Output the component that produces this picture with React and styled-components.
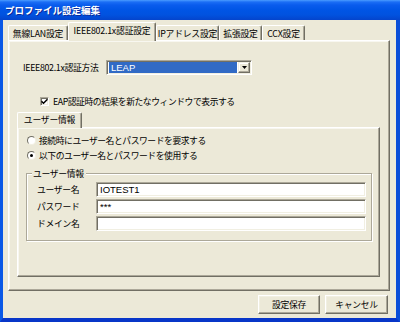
import React from 'react';
import styled, { createGlobalStyle } from 'styled-components';

const FONT = `"Noto Sans CJK JP", "Noto Sans", "Liberation Sans", sans-serif`;

const Global = createGlobalStyle`
  html, body { margin: 0; padding: 0; background: #fff; }
  body { width: 400px; height: 322px; overflow: hidden; }
  * { box-sizing: border-box; }
`;

const Window = styled.div`
  width: 400px;
  height: 322px;
  display: flex;
  flex-direction: column;
  font-family: ${FONT};
  font-size: 8.8px;
  color: #000;
`;

const TitleBar = styled.div`
  height: 20px;
  flex: none;
  display: flex;
  align-items: center;
  padding-left: 5px;
  color: #fff;
  font-weight: bold;
  font-size: 9.5px;
  text-shadow: 1px 1px 0 #0a2a9a;
  background: linear-gradient(
    to bottom,
    #4a9cff 0px,
    #1b6ef5 2px,
    #0a5ced 5px,
    #0055e5 10px,
    #0152df 15px,
    #0444cc 20px
  );
`;

const Frame = styled.div`
  flex: 1;
  display: flex;
  border-left: 3px solid #0a58e6;
  border-right: 4px solid #0a4ed8;
  border-bottom: 4px solid #0836c8;
`;

const Client = styled.div`
  flex: 1;
  display: flex;
  flex-direction: column;
  background: #ece9d8;
  padding: 2px 6px 0 5px;
`;

const TabStrip = styled.div`
  height: 18px;
  flex: none;
  display: flex;
  align-items: flex-end;
  position: relative;
  z-index: 1;
`;

const Tab = styled.div`
  width: ${(p) => p.$w}px;
  height: ${(p) => (p.$active ? 19 : 15)}px;
  margin-bottom: ${(p) => (p.$active ? -1 : 0)}px;
  display: flex;
  align-items: center;
  justify-content: center;
  background: #ece9d8;
  border-top: 1px solid #fff;
  border-left: 1px solid #fff;
  border-right: 1px solid #716f64;
  box-shadow: inset -1px 0 #aca899;
  border-radius: 2px 2px 0 0;
  white-space: nowrap;
  letter-spacing: -0.2px;
  padding-bottom: ${(p) => (p.$active ? 3 : 0)}px;
`;

const Panel = styled.div`
  height: ${(p) => p.$h}px;
  flex: none;
  display: flex;
  flex-direction: column;
  border: 1px solid;
  border-color: #fff #716f64 #716f64 #fff;
  box-shadow: inset -1px -1px #aca899, inset 1px 1px #f8f7f0;
  background: #ece9d8;
`;

const MainPanel = styled(Panel)`
  padding: 19px 9px 0 8px;
`;

const MethodRow = styled.div`
  display: flex;
  align-items: center;
  height: 15px;
  margin-left: 6px;
`;

const FieldLabel = styled.span`
  width: ${(p) => p.$w}px;
  flex: none;
  white-space: nowrap;
  letter-spacing: -0.3px;
`;

const Select = styled.div`
  width: 146px;
  height: 15px;
  display: flex;
  align-items: center;
  padding: 0 1px 0 2px;
  background: #fff;
  border: 1px solid;
  border-color: #aca899 #fff #fff #aca899;
  box-shadow: inset 1px 1px #716f64, inset -1px -1px #f1efe2;
`;

const SelectValue = styled.div`
  flex: 1;
  height: 11px;
  display: flex;
  align-items: center;
  background: #316ac5;
  color: #fff;
  padding-left: 2px;
  margin-right: 1px;
  font-family: "Liberation Sans", sans-serif;
  font-size: 9.5px;
`;

const DropButton = styled.div`
  width: 12px;
  height: 11px;
  flex: none;
  display: flex;
  align-items: center;
  justify-content: center;
  background: #ece9d8;
  border: 1px solid;
  border-color: #f1efe2 #716f64 #716f64 #f1efe2;
  box-shadow: inset -1px -1px #aca899, inset 1px 1px #fff;
`;

const CheckRow = styled.div`
  display: flex;
  align-items: center;
  height: 10px;
  margin: 21px 0 0 23px;
  gap: 4px;
  white-space: nowrap;
  letter-spacing: -0.45px;
`;

const CheckBox = styled.div`
  width: 9px;
  height: 9px;
  flex: none;
  display: flex;
  align-items: center;
  justify-content: center;
  background: #fff;
  border: 1px solid;
  border-color: #aca899 #fff #fff #aca899;
  box-shadow: inset 1px 1px #716f64, inset -1px -1px #f1efe2;
`;

const InnerStrip = styled.div`
  height: 15px;
  margin-top: 6px;
  flex: none;
  display: flex;
  align-items: flex-end;
  position: relative;
  z-index: 1;
`;

const InnerPanel = styled(Panel)`
  padding: 6px 7px 0 9px;
`;

const RadioRow = styled.div`
  display: flex;
  align-items: center;
  height: 12px;
  margin-top: ${(p) => p.$mt}px;
  gap: 3px;
  white-space: nowrap;
  letter-spacing: -0.45px;
`;

const Radio = styled.div`
  width: 9px;
  height: 9px;
  flex: none;
  border-radius: 50%;
  background: #fff;
  border: 1px solid;
  border-color: #716f64 #f1efe2 #f1efe2 #716f64;
  display: flex;
  align-items: center;
  justify-content: center;
  &::after {
    content: '';
    width: 3px;
    height: 3px;
    border-radius: 50%;
    background: ${(p) => (p.$on ? '#000' : 'transparent')};
  }
`;

const GroupBox = styled.div`
  margin: 12px 0 0 -1px;
  border: 1px solid #aca899;
  box-shadow: inset 1px 1px #fff, 1px 1px #fff;
  padding: 0 5px 9px 10px;
  display: flex;
  flex-direction: column;
`;

const Legend = styled.div`
  align-self: flex-start;
  margin: -6px 0 0 -5px;
  height: 11px;
  padding: 0 2px 0 1px;
  line-height: 11px;
  background: #ece9d8;
  letter-spacing: -0.3px;
`;

const Fields = styled.div`
  margin-top: 3px;
  display: flex;
  flex-direction: column;
  gap: 2px;
`;

const FieldRow = styled.div`
  display: flex;
  align-items: center;
  height: 15px;
`;

const Input = styled.div`
  flex: 1;
  height: 15px;
  display: flex;
  align-items: center;
  padding-left: 3px;
  background: #fff;
  border: 1px solid;
  border-color: #aca899 #fff #fff #aca899;
  box-shadow: inset 1px 1px #716f64, inset -1px -1px #f1efe2;
  font-family: "Liberation Sans", sans-serif;
  font-size: 9.5px;
`;

const ButtonRow = styled.div`
  height: 19px;
  margin-top: 4px;
  padding-right: 2px;
  display: flex;
  justify-content: flex-end;
  gap: 5px;
`;

const Button = styled.div`
  width: ${(p) => p.$w}px;
  height: 19px;
  display: flex;
  align-items: center;
  justify-content: center;
  background: #ece9d8;
  border: 1px solid;
  border-color: #fff #716f64 #716f64 #fff;
  box-shadow: inset -1px -1px #aca899, inset 1px 1px #f1efe2;
  letter-spacing: -0.3px;
`;

const tabs = [
  { label: '無線LAN設定', w: 60 },
  { label: 'IEEE802.1x認証設定', w: 88, active: true },
  { label: 'IPアドレス設定', w: 63 },
  { label: '拡張設定', w: 43 },
  { label: 'CCX設定', w: 43 },
];

const fields = [
  { label: 'ユーザー名', value: 'IOTEST1' },
  { label: 'パスワード', value: '***' },
  { label: 'ドメイン名', value: '' },
];

export default function App() {
  return (
    <Window>
      <Global />
      <TitleBar>プロファイル設定編集</TitleBar>
      <Frame>
        <Client>
          <TabStrip>
            {tabs.map((t) => (
              <Tab key={t.label} $w={t.w} $active={t.active}>
                {t.label}
              </Tab>
            ))}
          </TabStrip>
          <MainPanel $h={251}>
            <MethodRow>
              <FieldLabel $w={83}>IEEE802.1x認証方法</FieldLabel>
              <Select>
                <SelectValue>LEAP</SelectValue>
                <DropButton>
                  <svg width="5" height="3" viewBox="0 0 5 3">
                    <path d="M0 0h5L2.5 3z" fill="#000" />
                  </svg>
                </DropButton>
              </Select>
            </MethodRow>
            <CheckRow>
              <CheckBox>
                <svg width="7" height="7" viewBox="0 0 7 7">
                  <path d="M0.5 3.2 L2.5 5.2 L6.5 1.2" stroke="#000" strokeWidth="1.5" fill="none" />
                </svg>
              </CheckBox>
              EAP認証時の結果を新たなウィンドウで表示する
            </CheckRow>
            <InnerStrip>
              <Tab $w={65} $active style={{ height: 16 }}>
                ユーザー情報
              </Tab>
            </InnerStrip>
            <InnerPanel $h={150}>
              <RadioRow $mt={0}>
                <Radio />
                接続時にユーザー名とパスワードを要求する
              </RadioRow>
              <RadioRow $mt={3}>
                <Radio $on />
                以下のユーザー名とパスワードを使用する
              </RadioRow>
              <GroupBox>
                <Legend>ユーザー情報</Legend>
                <Fields>
                  {fields.map((f) => (
                    <FieldRow key={f.label}>
                      <FieldLabel $w={59}>{f.label}</FieldLabel>
                      <Input>{f.value}</Input>
                    </FieldRow>
                  ))}
                </Fields>
              </GroupBox>
            </InnerPanel>
          </MainPanel>
          <ButtonRow>
            <Button $w={62}>設定保存</Button>
            <Button $w={63}>キャンセル</Button>
          </ButtonRow>
        </Client>
      </Frame>
    </Window>
  );
}
